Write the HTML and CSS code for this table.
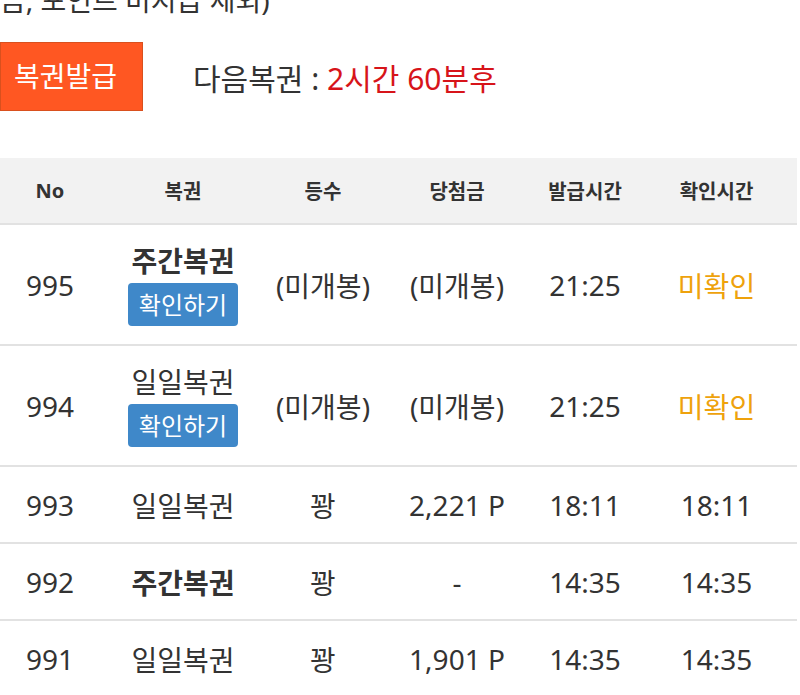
FILE: index.html
```html
<!DOCTYPE html>
<html lang="ko">
<head>
<meta charset="utf-8">
<title>복권</title>
<link rel="stylesheet" href="styles.css">
</head>
<body>
<p class="note">금, 포인트 미지급 제외)</p>
<div class="issue">
  <button class="issue-btn">복권발급</button>
  <span class="next">다음복권 : <span class="next-time">2시간 60분후</span></span>
</div>
<table class="list">
  <colgroup>
    <col class="c1"><col class="c2"><col class="c3"><col class="c4"><col class="c5"><col class="c6">
  </colgroup>
  <thead>
    <tr><th>No</th><th>복권</th><th>등수</th><th>당첨금</th><th>발급시간</th><th>확인시간</th></tr>
  </thead>
  <tbody>
    <tr class="tall">
      <td>995</td>
      <td><div class="name bold">주간복권</div><span class="check">확인하기</span></td>
      <td>(미개봉)</td><td>(미개봉)</td><td>21:25</td><td class="pending">미확인</td>
    </tr>
    <tr class="tall">
      <td>994</td>
      <td><div class="name">일일복권</div><span class="check">확인하기</span></td>
      <td>(미개봉)</td><td>(미개봉)</td><td>21:25</td><td class="pending">미확인</td>
    </tr>
    <tr class="short">
      <td>993</td><td>일일복권</td><td>꽝</td><td>2,221 P</td><td>18:11</td><td>18:11</td>
    </tr>
    <tr class="short">
      <td>992</td><td class="bold">주간복권</td><td>꽝</td><td>-</td><td>14:35</td><td>14:35</td>
    </tr>
    <tr class="short">
      <td>991</td><td>일일복권</td><td>꽝</td><td>1,901 P</td><td>14:35</td><td>14:35</td>
    </tr>
  </tbody>
</table>
</body>
</html>
```
FILE: styles.css
```css
html, body {
  margin: 0;
  padding: 0;
  background: #fff;
}
body {
  font-family: "Noto Sans", "Noto Sans CJK KR", sans-serif;
  color: #333;
  overflow: hidden;
}
.note {
  margin: -18px 0 0 0;
  font-size: 28px;
  line-height: 36px;
  color: #333;
  white-space: nowrap;
}
.issue {
  display: flex;
  align-items: center;
  margin-top: 24px;
  height: 69px;
}
.issue-btn {
  width: 143px;
  height: 69px;
  background: #ff5722;
  border: 1px solid #d9501e;
  color: #fff;
  font-family: inherit;
  font-size: 28px;
  line-height: 1;
  padding: 0 12px 2px 0;
  margin: 0;
}
.next {
  margin-left: 50px;
  font-size: 30px;
  color: #333;
}
.next-time {
  color: #d7141a;
}
.list {
  margin-top: 47px;
  width: 797px;
  border-collapse: collapse;
  table-layout: fixed;
}
.c1 { width: 100px; }
.c2 { width: 166px; }
.c3 { width: 114px; }
.c4 { width: 154px; }
.c5 { width: 102px; }
.c6 { width: 161px; }
.list th {
  height: 65px;
  background: #f2f2f2;
  font-size: 20px;
  font-weight: 700;
  color: #333;
  text-align: center;
  padding: 0;
  border-bottom: 2px solid #e2e2e2;
}
.list td {
  text-align: center;
  font-size: 28px;
  color: #333;
  padding: 0;
  border-bottom: 2px solid #e2e2e2;
  white-space: nowrap;
}
.list .tall td { height: 119px; }
.list .short td { height: 75px; }
.list .bold { font-weight: 700; }
.name {
  line-height: 36px;
}
.check {
  display: block;
  width: fit-content;
  margin: 4px auto 0;
  background: #3f88c9;
  color: #fff;
  font-size: 24px;
  line-height: 43px;
  height: 43px;
  padding: 0 11px;
  border-radius: 4px;
}
.list td.pending {
  color: #eea20c;
}
```
